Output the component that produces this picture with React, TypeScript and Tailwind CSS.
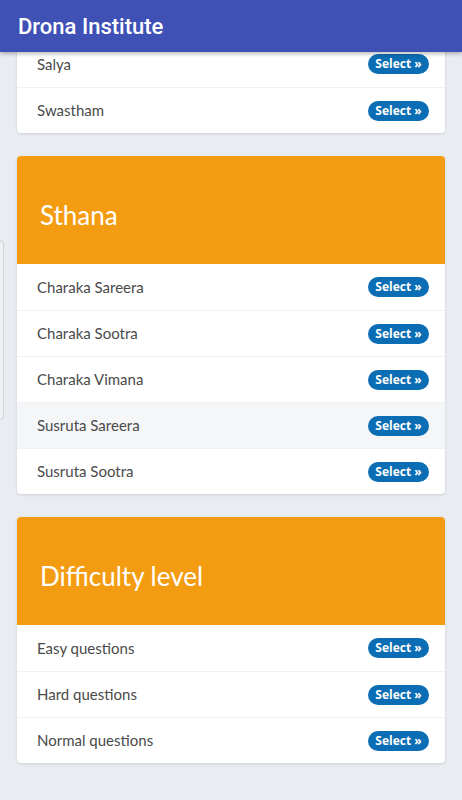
import React from 'react';

type Section = {
  title?: string;
  items: string[];
  active?: string;
};

const sections: Section[] = [
  { items: ['Salya', 'Swastham'] },
  {
    title: 'Sthana',
    items: ['Charaka Sareera', 'Charaka Sootra', 'Charaka Vimana', 'Susruta Sareera', 'Susruta Sootra'],
    active: 'Susruta Sareera',
  },
  { title: 'Difficulty level', items: ['Easy questions', 'Hard questions', 'Normal questions'] },
];

const SelectButton = () => (
  <button
    className="h-[20px] w-[61px] rounded-full bg-[#0b6db3] text-[12px] font-bold leading-none text-white"
    style={{ fontFamily: '"Open Sans", sans-serif' }}
  >
    Select »
  </button>
);

const Card = ({ section, first }: { section: Section; first?: boolean }) => (
  <div
    className={`overflow-hidden rounded-[4px] bg-white shadow-[0_1px_3px_rgba(0,0,0,0.12)] ${first ? '-mt-[11px] rounded-t-none' : ''}`}
  >
    {section.title && (
      <div className="flex h-[108px] items-center bg-[#f39c12] pl-[23px] pt-[10px] text-[26px] text-white">
        {section.title}
      </div>
    )}
    {section.items.map((item, i) => (
      <div
        key={item}
        className={`flex h-[46px] items-center justify-between pl-[20px] pr-[16px] ${
          i > 0 ? 'border-t border-[#f0f1f3]' : ''
        } ${section.active === item ? 'bg-[#f5f6f7]' : ''}`}
      >
        <span className="text-[15px] text-[#4a4a4a]">{item}</span>
        <SelectButton />
      </div>
    ))}
  </div>
);

export default function App() {
  return (
    <div
      className="relative flex h-[800px] w-[462px] flex-col overflow-hidden bg-[#e9ecf1]"
      style={{ fontFamily: 'Lato, "Noto Sans", sans-serif' }}
    >
      <header className="relative z-10 flex h-[52px] shrink-0 items-center bg-[#3f51b5] pl-[18px] shadow-[0_2px_4px_rgba(0,0,0,0.25)]">
        <h1 className="text-[22px] font-medium text-white" style={{ fontFamily: 'Roboto, sans-serif' }}>
          Drona Institute
        </h1>
      </header>
      <main className="flex flex-col gap-[23px] px-[17px]">
        {sections.map((s, i) => (
          <Card key={i} section={s} first={i === 0} />
        ))}
      </main>
      <div className="absolute left-[-6px] top-[240px] h-[180px] w-[10px] rounded-[4px] border border-[#cfd3d8] bg-[#eef0f3]" />
    </div>
  );
}
